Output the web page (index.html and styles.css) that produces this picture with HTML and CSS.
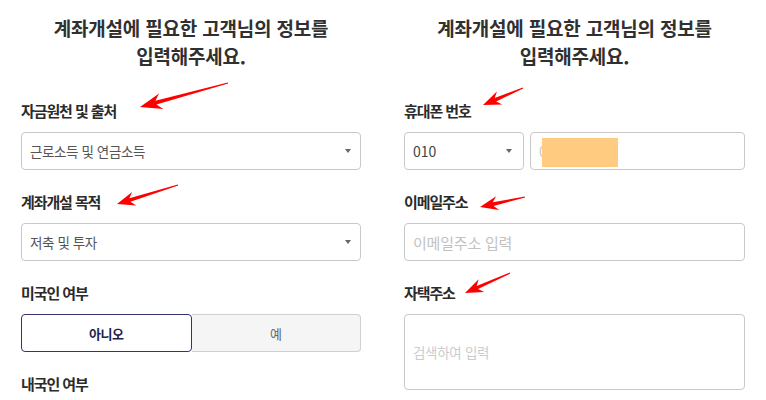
FILE: index.html
```html
<!DOCTYPE html>
<html lang="ko">
<head>
<meta charset="utf-8">
<title>계좌개설 정보 입력</title>
<link rel="stylesheet" href="styles.css">
</head>
<body>
<div class="page">
  <section class="col">
    <h1 class="title">계좌개설에 필요한 고객님의 정보를<br>입력해주세요.</h1>
    <div class="field">
      <div class="label">자금원천 및 출처</div>
      <div class="select"><span class="value">근로소득 및 연금소득</span><span class="caret"></span></div>
    </div>
    <div class="field">
      <div class="label">계좌개설 목적</div>
      <div class="select"><span class="value">저축 및 투자</span><span class="caret"></span></div>
    </div>
    <div class="field">
      <div class="label">미국인 여부</div>
      <div class="toggle">
        <div class="opt active">아니오</div>
        <div class="opt">예</div>
      </div>
    </div>
    <div class="field last">
      <div class="label">내국인 여부</div>
    </div>
  </section>
  <section class="col">
    <h1 class="title">계좌개설에 필요한 고객님의 정보를<br>입력해주세요.</h1>
    <div class="field">
      <div class="label">휴대폰 번호</div>
      <div class="phone-row">
        <div class="select phone-select"><span class="value num">010</span><span class="caret"></span></div>
        <div class="input phone-input"><span class="ph num">0</span><span class="mask"></span></div>
      </div>
    </div>
    <div class="field">
      <div class="label">이메일주소</div>
      <div class="input"><span class="ph email">이메일주소 입력</span></div>
    </div>
    <div class="field last">
      <div class="label">자택주소</div>
      <div class="input area"><span class="ph addr">검색하여 입력</span></div>
    </div>
  </section>
</div>
<svg class="arrows" width="766" height="400" viewBox="0 0 766 400" xmlns="http://www.w3.org/2000/svg">
  <polygon points="227.8,82.4 155.4,100.8 159.1,93.5 140,107 163.3,108.9 156.4,104.6 228.2,83.6"/>
  <polygon points="177.8,184.4 129.4,198.3 132.1,192.0 117,204 136.3,205.4 130.4,201.7 178.2,185.6"/>
  <polygon points="522.8,87.4 494.7,98.0 496.9,91.6 483,105 502.3,104.4 496.1,101.4 523.2,88.6"/>
  <polygon points="524.9,196.4 492.8,202.3 496.1,196.3 480,207 499.1,209.9 493.6,205.9 525.1,197.6"/>
  <polygon points="509.8,272.4 476.6,285.9 478.7,279.3 465,293 484.3,292.1 478.0,289.1 510.2,273.6"/>
</svg>
</body>
</html>
```
FILE: styles.css
```css
html, body {
  margin: 0;
  padding: 0;
  background: #ffffff;
}
body {
  position: relative;
  width: 766px;
  height: 400px;
  overflow: hidden;
  font-family: "Noto Sans CJK KR", "Noto Sans", sans-serif;
  color: #333333;
}
.page {
  display: grid;
  grid-template-columns: 383px 383px;
  height: 400px;
  overflow: hidden;
}
.col {
  padding: 14px 22px 0 21px;
  display: flex;
  flex-direction: column;
}
.col + .col {
  padding: 14px 21px 0 21px;
}
.title {
  margin: 0 0 30px 0;
  font-size: 19px;
  line-height: 28px;
  font-weight: 700;
  letter-spacing: -0.2px;
  text-align: center;
  color: #303030;
}
.field {
  margin-bottom: 21px;
}
.field.last {
  margin-bottom: 0;
}
.label {
  font-size: 15px;
  line-height: 22px;
  font-weight: 700;
  letter-spacing: -1.1px;
  color: #2b2b2b;
  margin-bottom: 10px;
}
.select, .input {
  box-sizing: border-box;
  height: 38px;
  border: 1px solid #c9c9c9;
  border-radius: 4px;
  display: flex;
  align-items: center;
  padding: 0 9px 0 8px;
  background: #fff;
}
.select {
  justify-content: space-between;
}
.value {
  font-size: 13.5px;
  letter-spacing: -0.4px;
  color: #555555;
}
.value.num {
  font-size: 14px;
  letter-spacing: 0;
  color: #444444;
}
.caret {
  width: 0;
  height: 0;
  border-left: 3.5px solid transparent;
  border-right: 3.5px solid transparent;
  border-top: 4px solid #666666;
}
.phone-row {
  display: flex;
  gap: 6px;
}
.phone-select {
  width: 120px;
  flex: 0 0 120px;
  padding-right: 11px;
}
.phone-input {
  flex: 1;
  position: relative;
}
.ph {
  color: #bdbdbd;
}
.ph.num {
  font-size: 14px;
  color: #cccccc;
}
.mask {
  position: absolute;
  left: 11px;
  top: 5px;
  width: 76px;
  height: 29px;
  background: #fecb80;
}
.ph.email {
  font-size: 15px;
  letter-spacing: -0.2px;
  color: #c2c2c2;
}
.area {
  height: 76px;
}
.ph.addr {
  font-size: 13.5px;
  letter-spacing: -0.3px;
  color: #cccccc;
}
.toggle {
  display: flex;
  height: 38px;
}
.opt {
  flex: 1;
  box-sizing: border-box;
  display: flex;
  align-items: center;
  justify-content: center;
  font-size: 13px;
  letter-spacing: -0.5px;
  color: #666666;
  background: #f5f5f5;
  border: 1px solid #d0d0d0;
  border-left: none;
  border-radius: 0 4px 4px 0;
}
.opt.active {
  background: #ffffff;
  color: #1f1f4f;
  font-weight: 700;
  border: 1px solid #34346e;
  border-radius: 4px;
}
.arrows {
  position: absolute;
  left: 0;
  top: 0;
  pointer-events: none;
  fill: #ff0000;
}
```
